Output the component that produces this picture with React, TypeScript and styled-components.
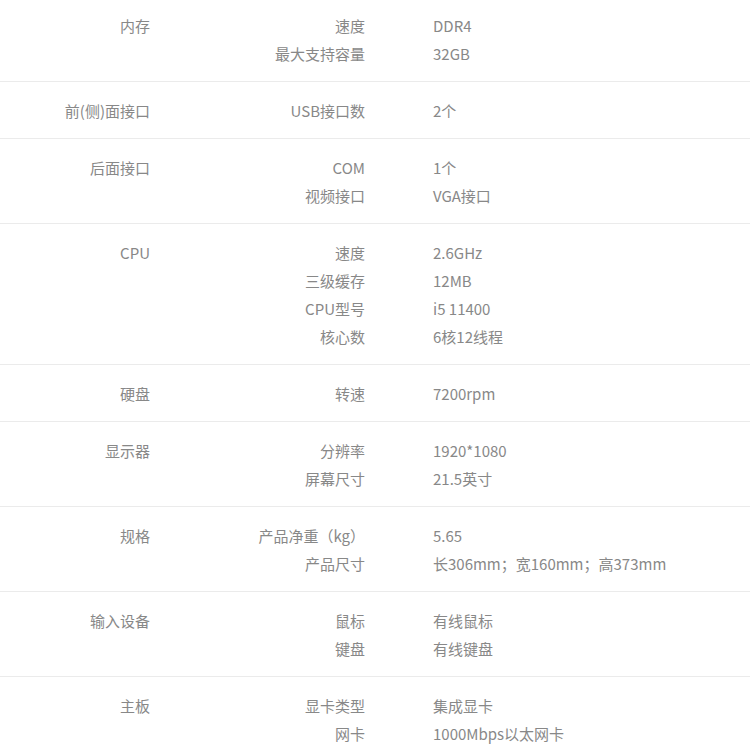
import styled, { createGlobalStyle } from 'styled-components';

type Spec = { name: string; value: string };
type Group = { title: string; specs: Spec[] };

const groups: Group[] = [
  {
    title: '内存',
    specs: [
      { name: '速度', value: 'DDR4' },
      { name: '最大支持容量', value: '32GB' },
    ],
  },
  { title: '前(侧)面接口', specs: [{ name: 'USB接口数', value: '2个' }] },
  {
    title: '后面接口',
    specs: [
      { name: 'COM', value: '1个' },
      { name: '视频接口', value: 'VGA接口' },
    ],
  },
  {
    title: 'CPU',
    specs: [
      { name: '速度', value: '2.6GHz' },
      { name: '三级缓存', value: '12MB' },
      { name: 'CPU型号', value: 'i5 11400' },
      { name: '核心数', value: '6核12线程' },
    ],
  },
  { title: '硬盘', specs: [{ name: '转速', value: '7200rpm' }] },
  {
    title: '显示器',
    specs: [
      { name: '分辨率', value: '1920*1080' },
      { name: '屏幕尺寸', value: '21.5英寸' },
    ],
  },
  {
    title: '规格',
    specs: [
      { name: '产品净重（kg）', value: '5.65' },
      { name: '产品尺寸', value: '长306mm；宽160mm；高373mm' },
    ],
  },
  {
    title: '输入设备',
    specs: [
      { name: '鼠标', value: '有线鼠标' },
      { name: '键盘', value: '有线键盘' },
    ],
  },
  {
    title: '主板',
    specs: [
      { name: '显卡类型', value: '集成显卡' },
      { name: '网卡', value: '1000Mbps以太网卡' },
    ],
  },
];

const GlobalStyle = createGlobalStyle`
  body {
    margin: 0;
    background: #fff;
    font-family: "Noto Sans CJK SC", "Noto Sans", sans-serif;
  }
`;

const App = () => (
  <>
    <GlobalStyle />
    <Table>
      {groups.map(g => (
        <GroupRow key={g.title}>
          <Title>{g.title}</Title>
          <SpecList>
            {g.specs.map(s => (
              <SpecRow key={s.name}>
                <SpecName>{s.name}</SpecName>
                <SpecValue>{s.value}</SpecValue>
              </SpecRow>
            ))}
          </SpecList>
        </GroupRow>
      ))}
    </Table>
  </>
);

const Table = styled.div`
  width: 750px;
  height: 750px;
  overflow: hidden;
  margin-top: -3px;
`;

// 구분선 위아래 여백이 살짝 달라 보여서 15/13으로 맞춤
const GroupRow = styled.div`
  display: grid;
  grid-template-columns: 150px 1fr;
  padding: 15px 0 13px;
  border-bottom: 1px solid #ebebeb;
  font-size: 15px;
  line-height: 28px;
  color: #888;
`;

const Title = styled.div`
  text-align: right;
  white-space: nowrap;
`;

const SpecList = styled.div`
  display: flex;
  flex-direction: column;
`;

const SpecRow = styled.div`
  display: grid;
  grid-template-columns: 215px 1fr;
  column-gap: 68px;
  height: 28px;
`;

const SpecName = styled.div`
  text-align: right;
  white-space: nowrap;
`;

const SpecValue = styled.div`
  white-space: nowrap;
`;

export default App;
